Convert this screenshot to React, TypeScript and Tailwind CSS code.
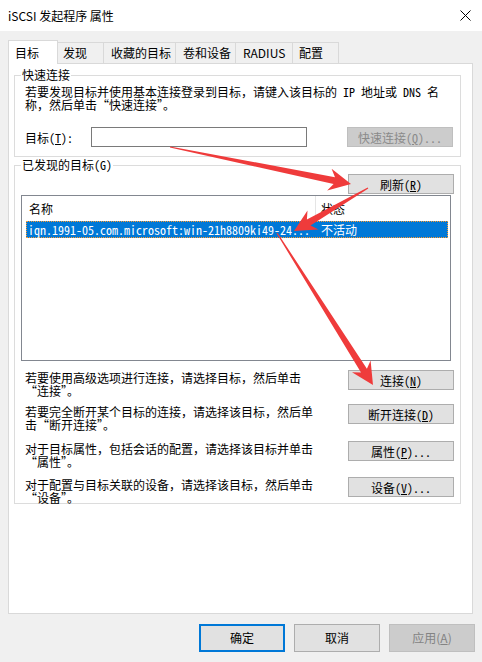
import React from "react"

const body = "font-['Noto_Sans_Mono_CJK_SC','Noto_Sans_CJK_SC',monospace] text-[12px] leading-[13px] text-black"
const ui = "font-['Noto_Sans_CJK_SC','Noto_Sans',sans-serif] text-[12px] text-black"

const Key = ({ k }: { k: string }) => <span className="underline underline-offset-1">{k}</span>

const SmallButton = ({ label, k, tail = "", disabled = false }: { label: string; k: string; tail?: string; disabled?: boolean }) => (
  <div
    className={
      "w-[106px] h-[20px] flex items-center justify-center border " +
      (disabled ? "bg-[#cccccc] border-[#bfbfbf] text-[#8a8a8a]" : "bg-[#e1e1e1] border-[#adadad]")
    }
  >
    <span className={body + (disabled ? " !text-[#8a8a8a]" : "")}>
      {label}(<Key k={k} />){tail}
    </span>
  </div>
)

const GroupBox = ({ title, className, children }: { title: string; className: string; children: React.ReactNode }) => (
  <div className={"relative border border-[#dcdcdc] " + className}>
    <div className={"absolute left-[6px] top-[-8px] px-[1px] bg-white " + body + " leading-[14px]"}>{title}</div>
    {children}
  </div>
)

const tabs = [
  { label: "发现", w: "w-[46px]", pl: "pl-[5px]" },
  { label: "收藏的目标", w: "w-[72px]", pl: "pl-[7px]" },
  { label: "卷和设备", w: "w-[60px]", pl: "pl-[7px]" },
  { label: "RADIUS", w: "w-[57px]", pl: "pl-[7px]" },
  { label: "配置", w: "w-[46px]", pl: "pl-[6px]" },
]

const rows = [
  { l1: "若要使用高级选项进行连接，请选择目标，然后单击", l2: "“连接”。", btn: "连接", k: "N", tail: "", mt: "mt-[9px]" },
  { l1: "若要完全断开某个目标的连接，请选择该目标，然后单", l2: "击“断开连接”。", btn: "断开连接", k: "D", tail: "", mt: "mt-[7px]" },
  { l1: "对于目标属性，包括会话的配置，请选择该目标并单击", l2: "“属性”。", btn: "属性", k: "P", tail: "...", mt: "mt-[10px]" },
  { l1: "对于配置与目标关联的设备，请选择该目标，然后单击", l2: "“设备”。", btn: "设备", k: "V", tail: "...", mt: "mt-[9px]" },
]

function arrowPoints(x1: number, y1: number, x2: number, y2: number, headLen = 22, headHalf = 11, tailHalf = 0.6, neckHalf = 3.5) {
  const dx = x2 - x1
  const dy = y2 - y1
  const len = Math.sqrt(dx * dx + dy * dy)
  const ux = dx / len
  const uy = dy / len
  const nx = -uy
  const ny = ux
  const bx = x2 - ux * headLen
  const by = y2 - uy * headLen
  const nbx = x2 - ux * (headLen - 5)
  const nby = y2 - uy * (headLen - 5)
  const pts = [
    [x1 + nx * tailHalf, y1 + ny * tailHalf],
    [nbx + nx * neckHalf, nby + ny * neckHalf],
    [bx + nx * headHalf, by + ny * headHalf],
    [x2, y2],
    [bx - nx * headHalf, by - ny * headHalf],
    [nbx - nx * neckHalf, nby - ny * neckHalf],
    [x1 - nx * tailHalf, y1 - ny * tailHalf],
  ]
  return pts.map((p) => p[0].toFixed(1) + "," + p[1].toFixed(1)).join(" ")
}

const Arrows = () => (
  <svg className="absolute left-0 top-0 pointer-events-none" width="482" height="662">
    <polygon points={arrowPoints(170, 147, 351, 184)} fill="#ef3b3b" />
    <polygon points={arrowPoints(368, 188, 294, 231)} fill="#ef3b3b" />
    <polygon points={arrowPoints(277, 233, 373, 385)} fill="#ef3b3b" />
  </svg>
)

const App = () => {
  return (
    <div className="relative w-[482px] h-[662px] bg-[#f0f0f0] overflow-hidden">
      <div className="h-[31px] bg-white flex items-center justify-between pl-[8px] pr-[11px]">
        <span className={ui + " leading-[14px]"}>iSCSI 发起程序 属性</span>
        <svg width="11" height="11" viewBox="0 0 11 11">
          <path d="M0.5 0.5 L10.5 10.5 M10.5 0.5 L0.5 10.5" stroke="#000" strokeWidth="1" />
        </svg>
      </div>

      <div className="flex items-end h-[32px] pl-[8px]">
        <div className={"relative z-10 -mb-px w-[50px] h-[24px] bg-white border-l border-t border-r border-[#d9d9d9] flex items-center pl-[6px] " + ui}>
          目标
        </div>
        {tabs.map((t) => (
          <div key={t.label} className={t.w + " " + t.pl + " h-[21px] border-t border-r border-[#d9d9d9] flex items-center " + ui}>
            {t.label}
          </div>
        ))}
      </div>

      <div className="ml-[8px] w-[465px] h-[551px] bg-white border border-[#d9d9d9]">
        <GroupBox title="快速连接" className="ml-[5px] mt-[11px] w-[447px] h-[82px]">
          <div className={"pl-[10px] pt-[9px] " + body}>
            若要发现目标并使用基本连接登录到目标，请键入该目标的 IP 地址或 DNS 名
            <br />
            称，然后单击“快速连接”。
          </div>
          <div className="flex items-center mt-[16px] pl-[10px]">
            <div className={"w-[66px] " + body}>
              目标(<Key k="T" />):
            </div>
            <div className="w-[216px] h-[20px] border border-[#7a7a7a] bg-white" />
            <div className="ml-[40px]">
              <SmallButton label="快速连接" k="Q" tail="..." disabled />
            </div>
          </div>
        </GroupBox>

        <GroupBox title="已发现的目标(G)" className="ml-[5px] mt-[8px] w-[447px] h-[339px]">
          <div className="flex justify-end pr-[6px] pt-[8px]">
            <SmallButton label="刷新" k="R" />
          </div>
          <div className="ml-[6px] mt-[1px] w-[430px] h-[166px] border border-[#828790] bg-white">
            <div className={"flex h-[25px] items-center " + body}>
              <div className="w-[294px] h-full flex items-center pl-[7px] border-r border-[#e5e5e5]">名称</div>
              <div className="pl-[5px]">状态</div>
            </div>
            <div className={"ml-[4px] w-[422px] h-[17px] flex items-center bg-[#0078d7] border border-dotted border-[#ff9a2e] text-white " + body + " !text-white"}>
              <div className="w-[289px] pl-[1px] whitespace-nowrap">iqn.1991-05.com.microsoft:win-21h8809ki49-24...</div>
              <div className="pl-[5px]">不活动</div>
            </div>
          </div>
          {rows.map((r) => (
            <div key={r.btn} className={"flex items-start justify-between pl-[10px] pr-[6px] " + r.mt}>
              <div className={body + " whitespace-nowrap pt-[1px]"}>
                {r.l1}
                <br />
                {r.l2}
              </div>
              <SmallButton label={r.btn} k={r.k} tail={r.tail} />
            </div>
          ))}
        </GroupBox>
      </div>

      <div className={"flex gap-[9px] pl-[199px] mt-[10px] " + ui}>
        <div className="w-[86px] h-[28px] flex items-center justify-center bg-[#e1e1e1] border-2 border-[#0078d7]">确定</div>
        <div className="w-[86px] h-[28px] flex items-center justify-center bg-[#e1e1e1] border border-[#adadad]">取消</div>
        <div className="w-[86px] h-[28px] flex items-center justify-center bg-[#cccccc] border border-[#bfbfbf] text-[#838383]">
          应用(<Key k="A" />)
        </div>
      </div>

      <Arrows />
    </div>
  )
}

export default App
